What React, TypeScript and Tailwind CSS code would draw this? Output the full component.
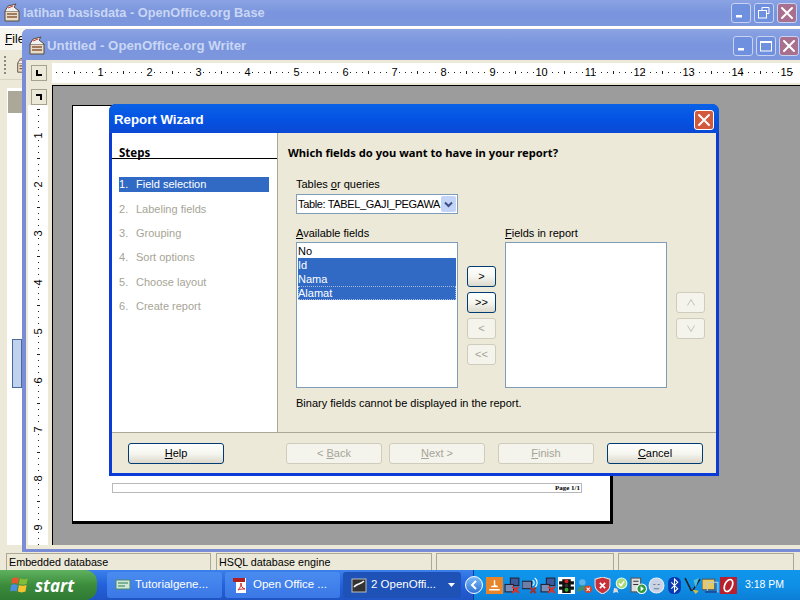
import React from "react";

const UI = { fontFamily: '"Liberation Sans", Tahoma, sans-serif' };
const BOLD = { fontFamily: '"Noto Sans", Tahoma, sans-serif' };

function WinBtn({ kind, faded }: { kind: "min" | "max" | "restore" | "close"; faded: boolean }) {
  const isClose = kind === "close";
  const bg = isClose
    ? faded
      ? "bg-[#a8708e] border-[#c9d3ef]"
      : "bg-[#d2593b] border-white"
    : "bg-[#6f8fdf] border-[#c9d3ef]";
  return (
    <div className={`w-[20px] h-[20px] rounded-[3px] border ${bg} flex items-center justify-center`}>
      <svg width="14" height="14" viewBox="0 0 14 14" fill="none" stroke="white">
        {kind === "min" && <rect x="2" y="9" width="6" height="2.5" fill="white" stroke="none" />}
        {kind === "max" && (
          <>
            <rect x="1.5" y="2.5" width="11" height="9.5" strokeWidth="1" />
            <line x1="1.5" y1="3" x2="12.5" y2="3" strokeWidth="2" />
          </>
        )}
        {kind === "restore" && (
          <>
            <path d="M5 4V1.5h7v6h-2.5" strokeWidth="1" />
            <rect x="1.5" y="4.5" width="8" height="7.5" strokeWidth="1" />
          </>
        )}
        {isClose && <path d="M2 2l10 10M12 2L2 12" strokeWidth="2" strokeLinecap="round" />}
      </svg>
    </div>
  );
}

function OOIcon({ size = 20 }: { size?: number }) {
  return (
    <svg width={size} height={size} viewBox="0 0 20 20" className="shrink-0">
      <path d="M3 8h14v10H3z" fill="#e8ddc8" stroke="#5b4a3a" />
      <path d="M3 8l3-5 8-2-2 3 5 4" fill="#f2f2f2" stroke="#5b4a3a" />
      <path d="M5 11h10M5 14h10" stroke="#8a5a3a" strokeWidth="1.5" />
      <path d="M6 5l5-2" stroke="#c33" strokeWidth="1" />
    </svg>
  );
}

function TitleBar({ title, buttons, cls, textCls }: { title: string; buttons: ("min" | "max" | "restore" | "close")[]; cls: string; textCls: string }) {
  return (
    <div className={`flex items-center bg-gradient-to-b from-[#8ba3e3] via-[#7a95de] to-[#7c97dc] ${cls}`}>
      <OOIcon />
      <span className={`font-bold text-[#c9d6f4] whitespace-nowrap ${textCls}`} style={UI}>
        {title}
      </span>
      <div className="ml-auto flex gap-[3px]">
        {buttons.map((b) => (
          <WinBtn key={b} kind={b} faded />
        ))}
      </div>
    </div>
  );
}

function HRuler() {
  const nums = Array.from({ length: 15 }, (_, i) => i + 1);
  return (
    <div className="h-[20px] flex-1 bg-white flex items-center overflow-hidden pl-[4px] text-[11px] text-black">
      {nums.map((n) => (
        <div key={n} className="w-[49px] shrink-0 flex items-center justify-end h-full">
          <svg width="40" height="5" viewBox="0 0 40 5" className="shrink-0">
            {[0, 6, 12, 24, 30, 36].map((x) => (
              <rect key={x} x={x} y="2" width="1" height="1" fill="#222" />
            ))}
            <rect x="18" y="1" width="1" height="3" fill="#222" />
          </svg>
          <span className="w-[9px] flex justify-center leading-none">{n}</span>
        </div>
      ))}
      <svg width="8" height="5" viewBox="0 0 8 5" className="shrink-0">
        <rect x="1" y="2" width="1" height="1" fill="#222" />
      </svg>
    </div>
  );
}

function VRuler() {
  const nums = [1, 2, 3, 4, 5, 6, 7, 8, 9];
  return (
    <div className="w-[20px] h-full bg-white overflow-hidden text-[11px] text-black">
      <div className="flex flex-col -mt-[14px]">
        {nums.map((n) => (
          <div key={n} className="h-[49px] shrink-0 flex flex-col items-center justify-end">
            <svg width="5" height="40" viewBox="0 0 5 40" className="shrink-0">
              {[0, 6, 12, 24, 30, 36].map((y) => (
                <rect key={y} x="2" y={y} width="1" height="1" fill="#222" />
              ))}
              <rect x="1" y="18" width="3" height="1" fill="#222" />
            </svg>
            <span className="h-[9px] flex items-center justify-center -rotate-90 leading-none">{n}</span>
          </div>
        ))}
        <svg width="5" height="14" viewBox="0 0 5 14" className="shrink-0 mx-auto">
          {[0, 6, 12].map((y) => (
            <rect key={y} x="2" y={y} width="1" height="1" fill="#222" />
          ))}
        </svg>
      </div>
    </div>
  );
}

function Corner({ flip }: { flip?: boolean }) {
  return (
    <div className="w-[16px] h-[16px] shrink-0 bg-[#ece9d8] border border-[#a5a28f] flex items-center justify-center">
      <svg width="8" height="8" viewBox="0 0 8 8">
        {flip ? <path d="M1 1h6v6H5V3H1z" fill="#000" /> : <path d="M1 1h2v4h4v2H1z" fill="#000" />}
      </svg>
    </div>
  );
}

function U({ children }: { children: React.ReactNode }) {
  return <span className="underline underline-offset-1">{children}</span>;
}

function Btn({ children, disabled, w = "w-[96px]" }: { children: React.ReactNode; disabled?: boolean; w?: string }) {
  return (
    <div
      className={`${w} h-[21px] rounded-[3px] border flex items-center justify-center text-[11px] leading-none ${
        disabled
          ? "border-[#cfccbc] bg-[#f4f3ec] text-[#a6a496]"
          : "border-[#003c74] bg-gradient-to-b from-white via-[#f6f6f0] to-[#dcd9cc] text-black"
      }`}
    >
      {children}
    </div>
  );
}

function Wizard() {
  const steps = ["Field selection", "Labeling fields", "Grouping", "Sort options", "Choose layout", "Create report"];
  const fields = ["No", "Id", "Nama", "Alamat"];
  return (
    <div className="absolute left-[109px] top-[104px] w-[610px] h-[372px] flex flex-col rounded-t-[7px] bg-[#0a3ad8] overflow-hidden" style={UI}>
      <div className="h-[29px] shrink-0 flex items-center pl-[5px] pr-[5px] pt-[3px] bg-gradient-to-b from-[#0a62e6] via-[#0553e3] to-[#0a49d4]">
        <span className="text-[13.25px] font-bold text-white" style={UI}>Report Wizard</span>
        <div className="ml-auto">
          <WinBtn kind="close" faded={false} />
        </div>
      </div>
      <div className="flex-1 mx-[3px] mb-[3px] flex flex-col bg-[#ece9d8] min-h-0">
        <div className="flex flex-1 min-h-0">
          <div className="w-[166px] shrink-0 bg-white border-r border-[#aca899] text-[11px]">
            <div className="h-[26px] pl-[7px] flex items-end border-b border-black w-[165px]">
              <span className="font-bold underline text-[11.5px] leading-[14px] text-black mb-[-2px]" style={BOLD}>Steps</span>
            </div>
            <div className="pl-[7px] pt-[18px] flex flex-col">
              {steps.map((s, i) => (
                <div
                  key={s}
                  className={`w-[150px] h-[15px] mb-[9.4px] flex items-center ${i === 0 ? "bg-[#316ac5] text-white" : "text-[#a6a496]"}`}
                >
                  <span className="w-[17px] shrink-0">{i + 1}.</span>
                  <span>{s}</span>
                </div>
              ))}
            </div>
          </div>
          <div className="flex-1 pl-[10px] pt-[13px] text-[11px] text-black leading-[14px]">
            <div className="font-bold text-[11.2px]" style={BOLD}>Which fields do you want to have in your report?</div>
            <div className="ml-[8px] mt-[17px]">
              Tables <U>o</U>r queries
            </div>
            <div className="ml-[8px] mt-[3px] w-[162px] h-[20px] bg-white border border-[#7f9db9] flex items-center pl-[1px] pr-[1px]">
              <span className="flex-1 min-w-0 whitespace-nowrap tracking-[-0.35px]">Table: TABEL_GAJI_PEGAWA</span>
              <div className="w-[15px] h-[16px] shrink-0 rounded-[2px] bg-[#c4d4f6] flex items-center justify-center">
                <svg width="9" height="7" viewBox="0 0 9 7" fill="none" stroke="#3a4f8a" strokeWidth="2">
                  <path d="M1 1.5l3.5 3.5L8 1.5" />
                </svg>
              </div>
            </div>
            <div className="flex mt-[12px] ml-[8px]">
              <div className="w-[162px] shrink-0">
                <div>
                  <U>A</U>vailable fields
                </div>
                <div className="w-[162px] h-[146px] mt-[2px] bg-white border border-[#7f9db9] p-[1px]">
                  {fields.map((f, i) => (
                    <div
                      key={f}
                      className={`h-[14px] leading-[14px] ${i > 0 ? "bg-[#316ac5] text-white" : ""} ${
                        i === 3 ? "outline outline-1 outline-dotted -outline-offset-1 outline-[#a9b8d8]" : ""
                      }`}
                    >
                      {f}
                    </div>
                  ))}
                </div>
              </div>
              <div className="w-[47px] shrink-0 pt-[40px] pl-[9px] flex flex-col gap-[5px] text-[11px]">
                <Btn w="w-[29px]">&gt;</Btn>
                <Btn w="w-[29px]">&gt;&gt;</Btn>
                <Btn w="w-[29px]" disabled>&lt;</Btn>
                <Btn w="w-[29px]" disabled>&lt;&lt;</Btn>
              </div>
              <div className="w-[162px] shrink-0">
                <div>
                  <U>F</U>ields in report
                </div>
                <div className="w-[162px] h-[146px] mt-[2px] bg-white border border-[#7f9db9]" />
              </div>
              <div className="pl-[9px] pt-[66px] flex flex-col gap-[5px]">
                <Btn w="w-[29px]" disabled>
                  <svg width="8" height="7" viewBox="0 0 8 7" fill="none" stroke="#c4c2b4"><path d="M.5 6.5L4 .5l3.5 6" /></svg>
                </Btn>
                <Btn w="w-[29px]" disabled>
                  <svg width="8" height="7" viewBox="0 0 8 7" fill="none" stroke="#c4c2b4"><path d="M.5.5L4 6.5 7.5.5" /></svg>
                </Btn>
              </div>
            </div>
            <div className="ml-[8px] mt-[8px]">Binary fields cannot be displayed in the report.</div>
          </div>
        </div>
        <div className="h-[41px] shrink-0 border-t border-[#aca899] flex items-center pl-[16px]">
          <Btn>
            <span>
              <U>H</U>elp
            </span>
          </Btn>
          <div className="ml-[62px]">
            <Btn disabled>
              <span>
                &lt; <U>B</U>ack
              </span>
            </Btn>
          </div>
          <div className="ml-[7px]">
            <Btn disabled>
              <span>
                <U>N</U>ext &gt;
              </span>
            </Btn>
          </div>
          <div className="ml-[13px]">
            <Btn disabled>
              <span>
                <U>F</U>inish
              </span>
            </Btn>
          </div>
          <div className="ml-[13px]">
            <Btn>
              <span>
                <U>C</U>ancel
              </span>
            </Btn>
          </div>
        </div>
      </div>
    </div>
  );
}

function WriterWindow() {
  return (
    <div className="absolute left-[22px] top-[29px] w-[778px] h-[523px] flex flex-col bg-[#7b8cd6] pl-[4px] pb-[3px] rounded-tl-[6px]">
      <TitleBar
        title="Untitled - OpenOffice.org Writer"
        buttons={["min", "max", "close"]}
        cls="h-[31px] shrink-0 -ml-[4px] pl-[5px] pr-[1px] pt-[2px] rounded-tl-[6px]"
        textCls="text-[13.25px]"
      />
      <div className="flex-1 flex flex-col bg-[#ece9d8] min-h-0 pb-[4px]">
        <div className="h-[25px] shrink-0 flex items-center pl-[5px]">
          <Corner />
          <div className="ml-[5px] flex-1 min-w-0 flex">
            <HRuler />
          </div>
        </div>
        <div className="flex-1 flex min-h-0">
          <div className="w-[26px] shrink-0 flex flex-col items-start pl-[5px] pt-[4px]">
            <Corner flip />
            <div className="-ml-[3px] flex-1 min-h-0 overflow-hidden flex">
              <VRuler />
            </div>
          </div>
          <div className="flex-1 bg-[#9c9c9c] border-l border-t border-black pl-[19px] pt-[19px] overflow-hidden">
            <div className="w-[541px] h-[419px] bg-white border-l border-t border-black border-r-[3px] border-b-[3px] pl-[39px] pt-[377px]">
              <div className="w-[470px] h-[10px] border border-[#b8b8b8] flex items-center justify-end pr-[1px]">
                <span className="text-[7px] font-bold leading-none text-black" style={{ fontFamily: '"Liberation Serif", serif' }}>
                  Page 1/1
                </span>
              </div>
            </div>
          </div>
        </div>
      </div>
    </div>
  );
}

function StartFlag() {
  return (
    <svg width="22" height="22" viewBox="0 0 20 20">
      <path d="M3 4c2-1 4-1 6 0l-1 5c-2-1-4-1-6 0z" fill="#e8562a" />
      <path d="M10 4c2 1 5 1 7 0l-1 5c-2 1-5 1-7 0z" fill="#82bd3a" />
      <path d="M2 10c2-1 4-1 6 0l-1 6c-2-1-4-1-6 0z" fill="#4d8de0" />
      <path d="M9 10c2 1 5 1 7 0l-1 6c-2 1-5 1-7 0z" fill="#f4c430" />
    </svg>
  );
}

function TaskBtn({ icon, label, active, arrow, w }: { icon: React.ReactNode; label: string; active?: boolean; arrow?: boolean; w: string }) {
  return (
    <div
      className={`${w} h-[26px] shrink-0 rounded-[3px] flex items-center pl-[8px] pr-[4px] text-[11.5px] text-white whitespace-nowrap ${
        active ? "bg-[#1e52b7]" : "bg-gradient-to-b from-[#4a8bf0] to-[#3a78e6]"
      }`}
    >
      {icon}
      <span className="ml-[4px]">{label}</span>
      {arrow && (
        <svg width="7" height="4" viewBox="0 0 7 4" className="ml-auto mr-[2px]">
          <path d="M0 0h7L3.5 4z" fill="white" />
        </svg>
      )}
    </div>
  );
}

function X({ x = 8, y = 9 }: { x?: number; y?: number }) {
  return <path d={`M${x} ${y}l6 6m0-6l-6 6`} stroke="#d8342a" strokeWidth="2" fill="none" />;
}

function Net() {
  return (
    <>
      <rect x="6" y="1" width="8" height="7" fill="#3c5a9a" stroke="#223" />
      <rect x="1" y="7" width="8" height="7" fill="#7a8cb8" stroke="#223" />
    </>
  );
}

function Tray() {
  const common = { width: 17, height: 17, viewBox: "0 0 16 16" };
  const icons = [
    <svg {...common} key="a"><rect width="16" height="16" fill="#e8852a" /><path d="M3 12h10M5 9h6M8 3v5l3 1" stroke="white" strokeWidth="1.3" fill="none" /></svg>,
    <svg {...common} key="b"><Net /><X /></svg>,
    <svg {...common} key="c"><rect x="0" y="4" width="9" height="7" fill="#6d7fa8" stroke="#223" /><path d="M10 3c2 1 2 4 0 5M12 1c3 2 3 7 0 9" stroke="white" fill="none" /><path d="M8 10l5 5m0-5l-5 5" stroke="#a03030" strokeWidth="2" /></svg>,
    <svg {...common} key="d"><Net /><X /></svg>,
    <svg {...common} key="e"><rect width="16" height="16" fill="white" /><path d="M4 2h8v13H4z M1 4h3v3H1z M12 4h3v3h-3z M1 9h3v3H1z M12 9h3v3h-3z" fill="#111" /><circle cx="8" cy="4" r="1.8" fill="#d92020" /><circle cx="8" cy="8" r="1.6" fill="#333" /><circle cx="8" cy="12" r="1.8" fill="#30b030" /></svg>,
    <svg {...common} key="f"><circle cx="6" cy="5" r="3" fill="#5fb3e8" /><path d="M1 14c0-4 3-6 6-6s4 2 4 3" fill="#3f8f70" /><circle cx="11.5" cy="11.5" r="3.5" fill="#d8442a" /><path d="M10 10l3 3m0-3l-3 3" stroke="white" /></svg>,
    <svg {...common} key="g"><path d="M8 0l7 2v6c0 4-3 6-7 8-4-2-7-4-7-8V2z" fill="#c8303a" stroke="#e8dfe0" /><path d="M5.5 5.5l5 5m0-5l-5 5" stroke="white" strokeWidth="1.6" /></svg>,
    <svg {...common} key="h"><circle cx="9" cy="6" r="5" fill="#a8d878" stroke="#dfe" /><path d="M6.5 6l2 2 3-4" stroke="white" strokeWidth="1.4" fill="none" /><path d="M2 10l3 1 1 4-2-1-3 1z" fill="#ddd" /></svg>,
    <svg {...common} key="i"><rect x="1" y="1" width="9" height="13" fill="#ddd" stroke="#555" /><path d="M3 4h5M3 7h5" stroke="#333" /><circle cx="11" cy="11" r="4.5" fill="#2f9a40" stroke="white" /><path d="M10 8.5l3 2.5-3 2.5z" fill="white" /></svg>,
    <svg {...common} key="j"><circle cx="8" cy="8" r="7" fill="#c9d3e4" stroke="#e9eef7" /><path d="M5 7h2M9 7h2M5.5 11h5" stroke="#6a7a98" /></svg>,
    <svg {...common} key="k"><rect x="2" y="0" width="12" height="16" rx="5" fill="#0a3ab0" /><path d="M5 5l6 6-3 3V2l3 3-6 6" stroke="white" fill="none" /></svg>,
    <svg {...common} key="l"><path d="M1 1l6 12M15 2L8 13" stroke="#222" strokeWidth="1.5" /><path d="M9 3l5-2-3 9z" fill="#50c0d8" /><path d="M8 12l6 1-3 3z" fill="#d8c040" /></svg>,
    <svg {...common} key="m"><rect x="0" y="2" width="12" height="10" fill="#e8c860" stroke="#555" /><rect x="5" y="5" width="10" height="9" fill="none" stroke="#bcd" /><rect x="3" y="13" width="11" height="2" fill="#1a4ea0" /></svg>,
    <svg {...common} key="n"><rect width="16" height="16" fill="#b8202e" /><ellipse cx="8" cy="8" rx="3.5" ry="6" transform="rotate(25 8 8)" fill="none" stroke="white" strokeWidth="1.6" /></svg>,
  ];
  return (
    <div className="ml-auto w-[327px] h-full shrink-0 flex items-center bg-gradient-to-b from-[#0f96ec] via-[#0f8fe6] to-[#0c7fd8] border-l border-[#0a3aa8]">
      <div className="w-[18px] h-[18px] -ml-[9px] rounded-full bg-gradient-to-b from-[#7ab8f4] to-[#2f72d8] border border-white flex items-center justify-center shrink-0">
        <svg width="8" height="10" viewBox="0 0 8 10" fill="none" stroke="white" strokeWidth="2"><path d="M6 1L2 5l4 4" /></svg>
      </div>
      <div className="ml-[2px] flex items-center">
        {icons.map((ic, i) => (
          <div key={i} className="w-[18px] h-[17px] flex items-center justify-center">{ic}</div>
        ))}
      </div>
      <span className="ml-[8px] text-[10.5px] text-white whitespace-nowrap">3:18 PM</span>
    </div>
  );
}

function Taskbar() {
  return (
    <div className="h-[30px] shrink-0 flex items-center bg-gradient-to-b from-[#3a80ea] via-[#2461dc] to-[#1f54c4]" style={UI}>
      <div className="w-[97px] h-full shrink-0 flex items-center pl-[9px] rounded-r-[12px] bg-gradient-to-b from-[#5fb25f] via-[#3c8c3c] to-[#2f7a34]">
        <StartFlag />
        <span className="ml-[4px] text-[17px] font-bold italic text-white leading-none" style={{ fontFamily: '"Open Sans", sans-serif' }}>start</span>
      </div>
      <div className="ml-[10px] flex gap-[3px]">
        <TaskBtn w="w-[115px]" label="Tutorialgene..." icon={
          <svg width="16" height="16" viewBox="0 0 16 16"><rect x="1" y="3" width="14" height="9" fill="#cfe8d8" stroke="#4a8a70" /><path d="M3 6h10M3 9h7" stroke="#2a7a50" /></svg>
        } />
        <TaskBtn w="w-[115px]" label="Open Office ..." icon={
          <svg width="16" height="16" viewBox="0 0 16 16"><path d="M3 1h10v15H3z" fill="white" /><rect x="0" y="1" width="12" height="4" fill="#b02020" /><path d="M5 13c3-3 3-6 3-7 0 3 1 5 4 6-3 0-5 0-7 1z" fill="none" stroke="#d02020" /></svg>
        } />
        <TaskBtn w="w-[118px]" active arrow label="2 OpenOffi..." icon={
          <svg width="16" height="16" viewBox="0 0 16 16"><rect x="1" y="2" width="14" height="13" fill="#333" stroke="#bbb" /><path d="M3 10c3-4 6-2 10-6" stroke="white" strokeWidth="1.5" fill="none" /></svg>
        } />
      </div>
      <Tray />
    </div>
  );
}

export default function App() {
  return (
    <div className="relative w-[800px] h-[600px] overflow-hidden flex flex-col bg-[#ece9d8]" style={UI}>
      <TitleBar
        title="latihan basisdata - OpenOffice.org Base"
        buttons={["min", "restore", "close"]}
        cls="h-[26px] shrink-0 pl-[2px] pr-[3px]"
        textCls="ml-[1px] text-[12.75px]"
      />
      <div className="h-[2px] shrink-0 bg-white" />
      <div className="h-[22px] shrink-0 flex items-center pl-[5px] text-[12px] text-black bg-[#f6f5ee]">
        <span>
          <U>F</U>ile
        </span>
      </div>
      <div className="h-[30px] shrink-0 flex items-center pl-[4px] bg-[#ece9d8] border-b border-[#d8d5c4]">
        <div className="w-[2px] h-[18px] border-l-2 border-dotted border-[#888]" />
        <div className="ml-[9px]">
          <OOIcon size={18} />
        </div>
      </div>
      <div className="flex-1 flex min-h-0 pt-[8px] pb-[8px]">
        <div className="ml-[7px] w-[15px] shrink-0 bg-white flex flex-col pt-[3px]">
          <div className="h-[22px] ml-[1px] bg-[#aca899] shrink-0" />
          <div className="ml-[5px] mt-[226px] h-[49px] bg-[#c1d2ee] border border-[#4a6a9a] shrink-0" />
        </div>
      </div>
      <div className="h-[18px] shrink-0 flex gap-[4px] pl-[6px] pr-[6px] text-[10.75px] text-black bg-[#ece9d8] mb-[-1px]">
        <div className="w-[205px] border border-[#aca899] flex items-center pl-[2px]">Embedded database</div>
        <div className="ml-[1px] w-[216px] border border-[#aca899] flex items-center pl-[2px]">HSQL database engine</div>
        <div className="w-[178px] border border-[#aca899]" />
        <div className="w-[176px] border border-[#aca899]" />
      </div>
      <Taskbar />
      <WriterWindow />
      <Wizard />
    </div>
  );
}
